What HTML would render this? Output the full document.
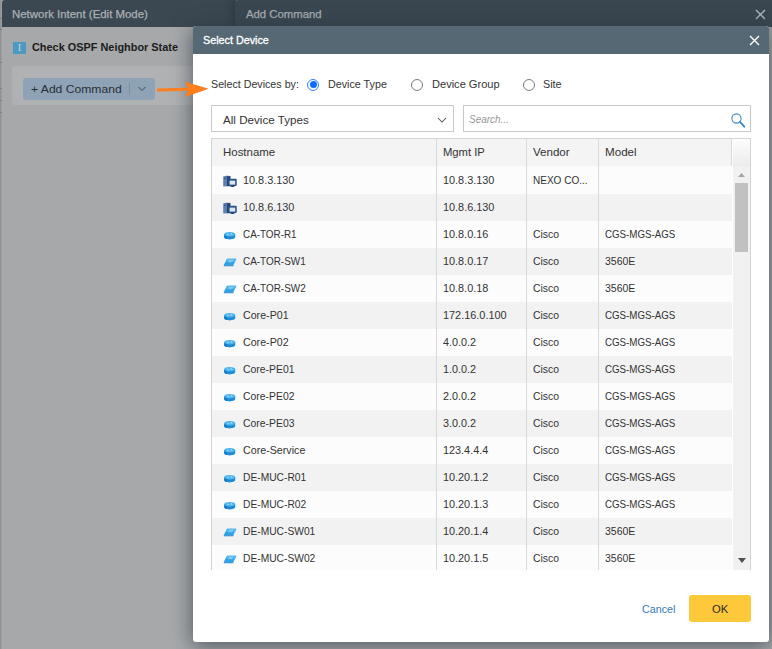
<!DOCTYPE html>
<html>
<head>
<meta charset="utf-8">
<title>Select Device</title>
<style>
html,body{margin:0;padding:0;}
body{width:772px;height:649px;overflow:hidden;position:relative;background:#a6a8aa;font-family:"Liberation Sans",Arial,sans-serif;font-size:10.8px;color:#333;}
.a{position:absolute;white-space:nowrap;}
.t{display:inline-block;transform-origin:0 50%;white-space:nowrap;}
#strip{left:0;top:0;width:2px;height:649px;background:linear-gradient(90deg,#8e8f91,#9fa0a2);}
#strip i{position:absolute;left:0;width:2px;height:1px;background:#7f8082;}
#hdrL{left:2px;top:0;width:234px;height:27px;background:#3b4851;border-top-left-radius:3px;}
#hdrR{left:235px;top:0;width:537px;height:27px;background:#3a4750;border-top-left-radius:3px;box-shadow:-3px 0 10px rgba(0,0,0,.22);}
.ht{-webkit-text-stroke:0.250px #abb0b4;color:#abb0b4;line-height:27px;top:0.700px;}
#box{left:12px;top:66px;width:190px;height:39px;background:#b0b1b2;border-radius:3px;}
#btn{left:23px;top:78px;width:132px;height:22px;background:#8fa3b7;border-radius:3px;}
#dlg{left:193px;top:26px;width:576px;height:616px;background:#fff;border-radius:3px;box-shadow:0 3px 20px 1px rgba(38,50,62,.66);}
#dh{left:193px;top:26px;width:576px;height:28px;background:#566873;border-radius:3px 3px 0 0;}
.lbl{line-height:16px;top:75.800px;color:#333;}
.radio{width:10px;height:10px;border:1px solid #7b7b7b;border-radius:50%;background:#fff;box-sizing:content-box;top:78.900px;}
.radio.on{border-color:#2f80ff;}
.radio.on:after{content:"";position:absolute;left:1.500px;top:1.500px;width:7px;height:7px;border-radius:50%;background:#0d6efd;}
.inp{top:105px;height:25px;border:1px solid #c9c9c9;background:#fff;}
#th{left:212px;top:139px;width:520px;height:27px;background:#f4f4f4;}
#thc{left:733px;top:139px;width:17px;height:27px;background:linear-gradient(#fdfdfd,#ececec);}
#tb{left:211px;top:138px;width:538px;height:431px;border:1px solid #d4d4d4;border-bottom:none;}
#rowsw{left:212px;top:139px;width:521px;height:431px;overflow:hidden;}
.row{position:absolute;left:0;width:519.800px;height:27px;}
.row.odd{background:#fcfcfc;}
.row.even{background:#f2f2f2;}
.c{position:absolute;top:0;line-height:27px;color:#333;white-space:nowrap;}
.c1{left:30.800px;}
.c2{left:230.700px;}
.c3{left:320.700px;}
.c4{left:392.700px;}
.hc{line-height:27px;top:139px;color:#333;}
.vl{top:139px;width:1px;height:431px;background:#d9d9d9;}
#sb{left:733px;top:166px;width:17px;height:404px;background:#f1f1f1;}
#thumb{left:735px;top:183px;width:13px;height:69px;background:#c1c1c1;}
.ic{position:absolute;left:10px;top:7.400px;width:16px;height:14px;}
#cancel{left:642.300px;top:600.700px;color:#337ab7;line-height:16px;}
#ok{left:689px;top:595px;width:62px;height:27px;background:#fdc83a;border-radius:3px;line-height:27px;color:#2b2b2b;}
</style>
</head>
<body>
<div id="strip" class="a"><i style="top:18px"></i><i style="top:29px"></i><i style="top:62px"></i><i style="top:88px"></i><i style="top:100px"></i><i style="top:112px"></i></div>
<div id="hdrL" class="a"></div>
<div id="hdrR" class="a"></div>
<div class="a ht" style="left:11.700px"><span class="t" style="font-size:10.8px;transform:scaleX(1.0580);">Network Intent (Edit Mode)</span></div>
<div class="a ht" style="left:246px"><span class="t" style="font-size:10.8px;transform:scaleX(1.0489);">Add Command</span></div>
<svg class="a" style="left:755px;top:9px" width="11" height="11" viewBox="0 0 11 11"><path d="M1 1L10 10M10 1L1 10" stroke="#b4b9bd" stroke-width="1.300" fill="none"/></svg>

<div class="a" style="left:13px;top:41.500px;width:13px;height:12.200px;background:#4c9bbf;color:#c4d9e4;font-family:'Liberation Serif',serif;font-size:10px;line-height:12px;text-align:center;">I</div>
<div class="a" style="left:31.500px;top:39px;line-height:16px;color:#1c1c1c;"><span class="t" style="font-size:10.8px;transform:scaleX(1.0095);font-weight:bold;">Check OSPF Neighbor State</span></div>
<div id="box" class="a"></div>
<div id="btn" class="a"></div>
<div class="a" style="left:30.500px;top:78px;line-height:21px;color:#2a2f35;"><span class="t" style="font-size:11.7px;transform:scaleX(1.0380);">+ Add Command</span></div>
<div class="a" style="left:129px;top:83px;width:1px;height:12px;background:#7f8e9e;"></div>
<svg class="a" style="left:137px;top:85px" width="10" height="8" viewBox="0 0 10 8"><path d="M1.500 2L5 5.500L8.500 2" stroke="#3a444d" stroke-width="1" fill="none"/></svg>

<div id="dlg" class="a"></div>
<div id="dh" class="a"></div>
<div class="a" style="left:203px;top:26px;line-height:28px;color:#fff;-webkit-text-stroke:0.300px #fff;"><span class="t" style="font-size:10.8px;transform:scaleX(0.9969);">Select Device</span></div>
<svg class="a" style="left:749px;top:35px" width="11" height="11" viewBox="0 0 11 11"><path d="M1 1L10 10M10 1L1 10" stroke="#fff" stroke-width="1.400" fill="none"/></svg>

<svg class="a" style="left:150px;top:76px" width="64" height="26" viewBox="150 76 64 26"><path d="M157 90L189.500 89.200" stroke="#fd7e1d" stroke-width="3" fill="none"/><path d="M185 81.800L208.700 88.800L185 96.900L188.600 89.300Z" fill="#fd7e1d"/></svg>
<div class="a lbl" style="left:211px"><span class="t" style="font-size:10.8px;transform:scaleX(0.9895);">Select Devices by:</span></div>
<div class="a radio on" style="left:307px"></div>
<div class="a lbl" style="left:328px"><span class="t" style="font-size:10.8px;transform:scaleX(0.9944);">Device Type</span></div>
<div class="a radio" style="left:410.800px"></div>
<div class="a lbl" style="left:431.500px"><span class="t" style="font-size:10.8px;transform:scaleX(1.0238);">Device Group</span></div>
<div class="a radio" style="left:522.800px"></div>
<div class="a lbl" style="left:543px"><span class="t" style="font-size:10.8px;transform:scaleX(0.9957);">Site</span></div>

<div class="a inp" style="left:211px;width:241px;"></div>
<div class="a" style="left:223px;top:105.800px;line-height:27px;color:#333;"><span class="t" style="font-size:11.7px;transform:scaleX(0.9945);">All Device Types</span></div>
<svg class="a" style="left:437px;top:116px" width="10" height="8" viewBox="0 0 10 8"><path d="M1 2L5 6L9 2" stroke="#555" stroke-width="1.050" fill="none"/></svg>
<div class="a inp" style="left:463px;width:286px;"></div>
<div class="a" style="left:469px;top:105.800px;line-height:27px;color:#979797;"><span class="t" style="font-size:10.8px;transform:scaleX(0.9208);font-style:italic;">Search...</span></div>
<svg class="a" style="left:729.500px;top:112px" width="17" height="17" viewBox="0 0 17 17"><circle cx="6.500" cy="6.500" r="4.600" stroke="#4089c0" stroke-width="1.100" fill="none"/><path d="M10 10L14.300 14.700" stroke="#2f7db8" stroke-width="1.800" stroke-linecap="round"/></svg>

<div id="th" class="a"></div>
<div id="thc" class="a"></div>
<div id="rowsw" class="a">
<div class="a" style="left:0;top:26.700px;width:519.800px;height:2px;background:#fcfcfc"></div>
<div id="rows">
<div class="row odd" style="top:27.8px"><svg class="ic" viewBox="0 0 16 14"><path d="M1.200 2.500H5V12.400H1.200Z" fill="#5c81b0"/><path d="M5 2.300L8.500 2V12.200H5Z" fill="#21467a"/><path d="M1.200 2.500L4.500 1.700L8.500 2L5 2.700Z" fill="#2d5388"/><rect x="2" y="3.800" width="1.600" height="1.200" fill="#2d5080"/><rect x="6.400" y="4.800" width="8.300" height="7.200" rx="1" fill="#2a5186"/><rect x="7.600" y="6.600" width="5.600" height="4" fill="#dbe6f3"/><ellipse cx="10.500" cy="12.300" rx="2.200" ry=".7" fill="#1d3f70"/></svg><div class="c c1"><span class="t" style="font-size:10.7px;transform:scaleX(1.0170);">10.8.3.130</span></div><div class="c c2"><span class="t" style="font-size:10.7px;transform:scaleX(1.0170);">10.8.3.130</span></div><div class="c c3"><span class="t" style="font-size:10.7px;transform:scaleX(0.9371);">NEXO CO...</span></div></div>
<div class="row even" style="top:54.8px"><svg class="ic" viewBox="0 0 16 14"><path d="M1.200 2.500H5V12.400H1.200Z" fill="#5c81b0"/><path d="M5 2.300L8.500 2V12.200H5Z" fill="#21467a"/><path d="M1.200 2.500L4.500 1.700L8.500 2L5 2.700Z" fill="#2d5388"/><rect x="2" y="3.800" width="1.600" height="1.200" fill="#2d5080"/><rect x="6.400" y="4.800" width="8.300" height="7.200" rx="1" fill="#2a5186"/><rect x="7.600" y="6.600" width="5.600" height="4" fill="#dbe6f3"/><ellipse cx="10.500" cy="12.300" rx="2.200" ry=".7" fill="#1d3f70"/></svg><div class="c c1"><span class="t" style="font-size:10.7px;transform:scaleX(1.0170);">10.8.6.130</span></div><div class="c c2"><span class="t" style="font-size:10.7px;transform:scaleX(1.0170);">10.8.6.130</span></div></div>
<div class="row odd" style="top:81.8px"><svg class="ic" viewBox="0 0 16 14"><path d="M2.200 6.200v2.900c0 1.300 2.400 2.300 5.500 2.300s5.500-1 5.500-2.300V6.200z" fill="#1d8cd6"/><path d="M2.200 6.200v2.900c0 .9 1 1.600 2.600 2V7.800z" fill="#1577c0"/><ellipse cx="7.700" cy="6.200" rx="5.500" ry="2.300" fill="#48b4f0"/><path d="M4.800 5.800l2 .6M10.600 6.700l-2-.6M5.600 7.100l1.500-.6M9.800 5.400l-1.500.6" stroke="#c4e8fb" stroke-width=".6" fill="none"/></svg><div class="c c1"><span class="t" style="font-size:10.7px;transform:scaleX(0.9238);">CA-TOR-R1</span></div><div class="c c2"><span class="t" style="font-size:10.7px;transform:scaleX(1.0153);">10.8.0.16</span></div><div class="c c3"><span class="t" style="font-size:10.7px;transform:scaleX(0.9750);">Cisco</span></div><div class="c c4"><span class="t" style="font-size:10.7px;transform:scaleX(0.9115);">CGS-MGS-AGS</span></div></div>
<div class="row even" style="top:108.8px"><svg class="ic" viewBox="0 0 16 14"><path d="M5.600 3.700h8.400q.5 0 .3.500l-2.800 5.600q-.2.400-.7.400H2.200q-.5 0-.3-.500l3-5.600q.2-.4.700-.4z" fill="#2fa2e8"/><path d="M5.600 3.700h8.400q.5 0 .3.500l-1.300 2.600H3.700l1.200-2.700q.2-.4.700-.4z" fill="#55b9f1"/><path d="M1.800 10.200h9.200l.5-.4v1.100q-.2.400-.7.400H2.200q-.4 0-.4-.4z" fill="#1a84cf"/><path d="M7 5.400h4M6.300 6.800h4" stroke="#b4e0f9" stroke-width=".6"/></svg><div class="c c1"><span class="t" style="font-size:10.7px;transform:scaleX(0.9282);">CA-TOR-SW1</span></div><div class="c c2"><span class="t" style="font-size:10.7px;transform:scaleX(1.0153);">10.8.0.17</span></div><div class="c c3"><span class="t" style="font-size:10.7px;transform:scaleX(0.9750);">Cisco</span></div><div class="c c4"><span class="t" style="font-size:10.7px;transform:scaleX(0.9821);">3560E</span></div></div>
<div class="row odd" style="top:135.8px"><svg class="ic" viewBox="0 0 16 14"><path d="M5.600 3.700h8.400q.5 0 .3.500l-2.800 5.600q-.2.400-.7.400H2.200q-.5 0-.3-.500l3-5.600q.2-.4.700-.4z" fill="#2fa2e8"/><path d="M5.600 3.700h8.400q.5 0 .3.500l-1.300 2.600H3.700l1.200-2.700q.2-.4.700-.4z" fill="#55b9f1"/><path d="M1.800 10.200h9.200l.5-.4v1.100q-.2.400-.7.400H2.200q-.4 0-.4-.4z" fill="#1a84cf"/><path d="M7 5.400h4M6.300 6.800h4" stroke="#b4e0f9" stroke-width=".6"/></svg><div class="c c1"><span class="t" style="font-size:10.7px;transform:scaleX(0.9282);">CA-TOR-SW2</span></div><div class="c c2"><span class="t" style="font-size:10.7px;transform:scaleX(1.0153);">10.8.0.18</span></div><div class="c c3"><span class="t" style="font-size:10.7px;transform:scaleX(0.9750);">Cisco</span></div><div class="c c4"><span class="t" style="font-size:10.7px;transform:scaleX(0.9821);">3560E</span></div></div>
<div class="row even" style="top:162.8px"><svg class="ic" viewBox="0 0 16 14"><path d="M2.200 6.200v2.900c0 1.300 2.400 2.300 5.500 2.300s5.500-1 5.500-2.300V6.200z" fill="#1d8cd6"/><path d="M2.200 6.200v2.900c0 .9 1 1.600 2.600 2V7.800z" fill="#1577c0"/><ellipse cx="7.700" cy="6.200" rx="5.500" ry="2.300" fill="#48b4f0"/><path d="M4.800 5.800l2 .6M10.600 6.700l-2-.6M5.600 7.100l1.500-.6M9.800 5.400l-1.500.6" stroke="#c4e8fb" stroke-width=".6" fill="none"/></svg><div class="c c1"><span class="t" style="font-size:10.7px;transform:scaleX(0.9963);">Core-P01</span></div><div class="c c2"><span class="t" style="font-size:10.7px;transform:scaleX(1.0194);">172.16.0.100</span></div><div class="c c3"><span class="t" style="font-size:10.7px;transform:scaleX(0.9750);">Cisco</span></div><div class="c c4"><span class="t" style="font-size:10.7px;transform:scaleX(0.9115);">CGS-MGS-AGS</span></div></div>
<div class="row odd" style="top:189.8px"><svg class="ic" viewBox="0 0 16 14"><path d="M2.200 6.200v2.900c0 1.300 2.400 2.300 5.500 2.300s5.500-1 5.500-2.300V6.200z" fill="#1d8cd6"/><path d="M2.200 6.200v2.900c0 .9 1 1.600 2.600 2V7.800z" fill="#1577c0"/><ellipse cx="7.700" cy="6.200" rx="5.500" ry="2.300" fill="#48b4f0"/><path d="M4.800 5.800l2 .6M10.600 6.700l-2-.6M5.600 7.100l1.500-.6M9.800 5.400l-1.500.6" stroke="#c4e8fb" stroke-width=".6" fill="none"/></svg><div class="c c1"><span class="t" style="font-size:10.7px;transform:scaleX(0.9963);">Core-P02</span></div><div class="c c2"><span class="t" style="font-size:10.7px;transform:scaleX(1.0102);">4.0.0.2</span></div><div class="c c3"><span class="t" style="font-size:10.7px;transform:scaleX(0.9750);">Cisco</span></div><div class="c c4"><span class="t" style="font-size:10.7px;transform:scaleX(0.9115);">CGS-MGS-AGS</span></div></div>
<div class="row even" style="top:216.8px"><svg class="ic" viewBox="0 0 16 14"><path d="M2.200 6.200v2.900c0 1.300 2.400 2.300 5.500 2.300s5.500-1 5.500-2.300V6.200z" fill="#1d8cd6"/><path d="M2.200 6.200v2.900c0 .9 1 1.600 2.600 2V7.800z" fill="#1577c0"/><ellipse cx="7.700" cy="6.200" rx="5.500" ry="2.300" fill="#48b4f0"/><path d="M4.800 5.800l2 .6M10.600 6.700l-2-.6M5.600 7.100l1.500-.6M9.800 5.400l-1.500.6" stroke="#c4e8fb" stroke-width=".6" fill="none"/></svg><div class="c c1"><span class="t" style="font-size:10.7px;transform:scaleX(0.9732);">Core-PE01</span></div><div class="c c2"><span class="t" style="font-size:10.7px;transform:scaleX(1.0102);">1.0.0.2</span></div><div class="c c3"><span class="t" style="font-size:10.7px;transform:scaleX(0.9750);">Cisco</span></div><div class="c c4"><span class="t" style="font-size:10.7px;transform:scaleX(0.9115);">CGS-MGS-AGS</span></div></div>
<div class="row odd" style="top:243.8px"><svg class="ic" viewBox="0 0 16 14"><path d="M2.200 6.200v2.900c0 1.300 2.400 2.300 5.500 2.300s5.500-1 5.500-2.300V6.200z" fill="#1d8cd6"/><path d="M2.200 6.200v2.900c0 .9 1 1.600 2.600 2V7.800z" fill="#1577c0"/><ellipse cx="7.700" cy="6.200" rx="5.500" ry="2.300" fill="#48b4f0"/><path d="M4.800 5.800l2 .6M10.600 6.700l-2-.6M5.600 7.100l1.500-.6M9.800 5.400l-1.500.6" stroke="#c4e8fb" stroke-width=".6" fill="none"/></svg><div class="c c1"><span class="t" style="font-size:10.7px;transform:scaleX(0.9732);">Core-PE02</span></div><div class="c c2"><span class="t" style="font-size:10.7px;transform:scaleX(1.0102);">2.0.0.2</span></div><div class="c c3"><span class="t" style="font-size:10.7px;transform:scaleX(0.9750);">Cisco</span></div><div class="c c4"><span class="t" style="font-size:10.7px;transform:scaleX(0.9115);">CGS-MGS-AGS</span></div></div>
<div class="row even" style="top:270.8px"><svg class="ic" viewBox="0 0 16 14"><path d="M2.200 6.200v2.900c0 1.300 2.400 2.300 5.500 2.300s5.500-1 5.500-2.300V6.200z" fill="#1d8cd6"/><path d="M2.200 6.200v2.900c0 .9 1 1.600 2.600 2V7.800z" fill="#1577c0"/><ellipse cx="7.700" cy="6.200" rx="5.500" ry="2.300" fill="#48b4f0"/><path d="M4.800 5.800l2 .6M10.600 6.700l-2-.6M5.600 7.100l1.500-.6M9.800 5.400l-1.500.6" stroke="#c4e8fb" stroke-width=".6" fill="none"/></svg><div class="c c1"><span class="t" style="font-size:10.7px;transform:scaleX(0.9732);">Core-PE03</span></div><div class="c c2"><span class="t" style="font-size:10.7px;transform:scaleX(1.0102);">3.0.0.2</span></div><div class="c c3"><span class="t" style="font-size:10.7px;transform:scaleX(0.9750);">Cisco</span></div><div class="c c4"><span class="t" style="font-size:10.7px;transform:scaleX(0.9115);">CGS-MGS-AGS</span></div></div>
<div class="row odd" style="top:297.8px"><svg class="ic" viewBox="0 0 16 14"><path d="M2.200 6.200v2.900c0 1.300 2.400 2.300 5.500 2.300s5.500-1 5.500-2.300V6.200z" fill="#1d8cd6"/><path d="M2.200 6.200v2.900c0 .9 1 1.600 2.600 2V7.800z" fill="#1577c0"/><ellipse cx="7.700" cy="6.200" rx="5.500" ry="2.300" fill="#48b4f0"/><path d="M4.800 5.800l2 .6M10.600 6.700l-2-.6M5.600 7.100l1.500-.6M9.800 5.400l-1.500.6" stroke="#c4e8fb" stroke-width=".6" fill="none"/></svg><div class="c c1"><span class="t" style="font-size:10.7px;transform:scaleX(0.9994);">Core-Service</span></div><div class="c c2"><span class="t" style="font-size:10.7px;transform:scaleX(1.0153);">123.4.4.4</span></div><div class="c c3"><span class="t" style="font-size:10.7px;transform:scaleX(0.9750);">Cisco</span></div><div class="c c4"><span class="t" style="font-size:10.7px;transform:scaleX(0.9115);">CGS-MGS-AGS</span></div></div>
<div class="row even" style="top:324.8px"><svg class="ic" viewBox="0 0 16 14"><path d="M2.200 6.200v2.900c0 1.300 2.400 2.300 5.500 2.300s5.500-1 5.500-2.300V6.200z" fill="#1d8cd6"/><path d="M2.200 6.200v2.900c0 .9 1 1.600 2.600 2V7.800z" fill="#1577c0"/><ellipse cx="7.700" cy="6.200" rx="5.500" ry="2.300" fill="#48b4f0"/><path d="M4.800 5.800l2 .6M10.600 6.700l-2-.6M5.600 7.100l1.500-.6M9.800 5.400l-1.500.6" stroke="#c4e8fb" stroke-width=".6" fill="none"/></svg><div class="c c1"><span class="t" style="font-size:10.7px;transform:scaleX(0.9594);">DE-MUC-R01</span></div><div class="c c2"><span class="t" style="font-size:10.7px;transform:scaleX(1.0153);">10.20.1.2</span></div><div class="c c3"><span class="t" style="font-size:10.7px;transform:scaleX(0.9750);">Cisco</span></div><div class="c c4"><span class="t" style="font-size:10.7px;transform:scaleX(0.9115);">CGS-MGS-AGS</span></div></div>
<div class="row odd" style="top:351.8px"><svg class="ic" viewBox="0 0 16 14"><path d="M2.200 6.200v2.900c0 1.300 2.400 2.300 5.500 2.300s5.500-1 5.500-2.300V6.200z" fill="#1d8cd6"/><path d="M2.200 6.200v2.900c0 .9 1 1.600 2.600 2V7.800z" fill="#1577c0"/><ellipse cx="7.700" cy="6.200" rx="5.500" ry="2.300" fill="#48b4f0"/><path d="M4.800 5.800l2 .6M10.600 6.700l-2-.6M5.600 7.100l1.500-.6M9.800 5.400l-1.500.6" stroke="#c4e8fb" stroke-width=".6" fill="none"/></svg><div class="c c1"><span class="t" style="font-size:10.7px;transform:scaleX(0.9594);">DE-MUC-R02</span></div><div class="c c2"><span class="t" style="font-size:10.7px;transform:scaleX(1.0153);">10.20.1.3</span></div><div class="c c3"><span class="t" style="font-size:10.7px;transform:scaleX(0.9750);">Cisco</span></div><div class="c c4"><span class="t" style="font-size:10.7px;transform:scaleX(0.9115);">CGS-MGS-AGS</span></div></div>
<div class="row even" style="top:378.8px"><svg class="ic" viewBox="0 0 16 14"><path d="M5.600 3.700h8.400q.5 0 .3.500l-2.800 5.600q-.2.400-.7.400H2.200q-.5 0-.3-.500l3-5.600q.2-.4.700-.4z" fill="#2fa2e8"/><path d="M5.600 3.700h8.400q.5 0 .3.500l-1.300 2.600H3.700l1.200-2.700q.2-.4.700-.4z" fill="#55b9f1"/><path d="M1.800 10.200h9.200l.5-.4v1.100q-.2.400-.7.400H2.200q-.4 0-.4-.4z" fill="#1a84cf"/><path d="M7 5.400h4M6.300 6.800h4" stroke="#b4e0f9" stroke-width=".6"/></svg><div class="c c1"><span class="t" style="font-size:10.7px;transform:scaleX(0.9588);">DE-MUC-SW01</span></div><div class="c c2"><span class="t" style="font-size:10.7px;transform:scaleX(1.0153);">10.20.1.4</span></div><div class="c c3"><span class="t" style="font-size:10.7px;transform:scaleX(0.9750);">Cisco</span></div><div class="c c4"><span class="t" style="font-size:10.7px;transform:scaleX(0.9821);">3560E</span></div></div>
<div class="row odd" style="top:405.8px"><svg class="ic" viewBox="0 0 16 14"><path d="M5.600 3.700h8.400q.5 0 .3.500l-2.800 5.600q-.2.400-.7.400H2.200q-.5 0-.3-.500l3-5.600q.2-.4.700-.4z" fill="#2fa2e8"/><path d="M5.600 3.700h8.400q.5 0 .3.500l-1.300 2.600H3.700l1.200-2.700q.2-.4.700-.4z" fill="#55b9f1"/><path d="M1.800 10.200h9.200l.5-.4v1.100q-.2.400-.7.400H2.200q-.4 0-.4-.4z" fill="#1a84cf"/><path d="M7 5.400h4M6.300 6.800h4" stroke="#b4e0f9" stroke-width=".6"/></svg><div class="c c1"><span class="t" style="font-size:10.7px;transform:scaleX(0.9588);">DE-MUC-SW02</span></div><div class="c c2"><span class="t" style="font-size:10.7px;transform:scaleX(1.0153);">10.20.1.5</span></div><div class="c c3"><span class="t" style="font-size:10.7px;transform:scaleX(0.9750);">Cisco</span></div><div class="c c4"><span class="t" style="font-size:10.7px;transform:scaleX(0.9821);">3560E</span></div></div>
</div>
</div>
<div id="sb" class="a"></div>
<div id="thumb" class="a"></div>
<svg class="a" style="left:738px;top:173px" width="7" height="4" viewBox="0 0 7 4"><path d="M0 4L3.500 0L7 4Z" fill="#a6a6a6"/></svg>
<svg class="a" style="left:737.500px;top:558px" width="8" height="5" viewBox="0 0 8 5"><path d="M0 0L4 5L8 0Z" fill="#505050"/></svg>
<div class="a vl" style="left:436px"></div>
<div class="a vl" style="left:526px"></div>
<div class="a vl" style="left:598px"></div>
<div class="a vl" style="left:731px;height:27px"></div>
<div id="tb" class="a"></div>
<div class="a hc" style="left:223px"><span class="t" style="font-size:10.8px;transform:scaleX(1.0604);">Hostname</span></div>
<div class="a hc" style="left:443px"><span class="t" style="font-size:10.8px;transform:scaleX(1.0408);">Mgmt IP</span></div>
<div class="a hc" style="left:533px"><span class="t" style="font-size:10.8px;transform:scaleX(1.0712);">Vendor</span></div>
<div class="a hc" style="left:605px"><span class="t" style="font-size:10.8px;transform:scaleX(1.0771);">Model</span></div>

<div id="cancel" class="a"><span class="t" style="font-size:10.8px;transform:scaleX(0.9929);">Cancel</span></div>
<div id="ok" class="a"></div>
<div class="a" style="left:712px;top:594.500px;line-height:27px;color:#2b2b2b;"><span class="t" style="font-size:11.7px;transform:scaleX(0.9638);">OK</span></div>
</body>
</html>
